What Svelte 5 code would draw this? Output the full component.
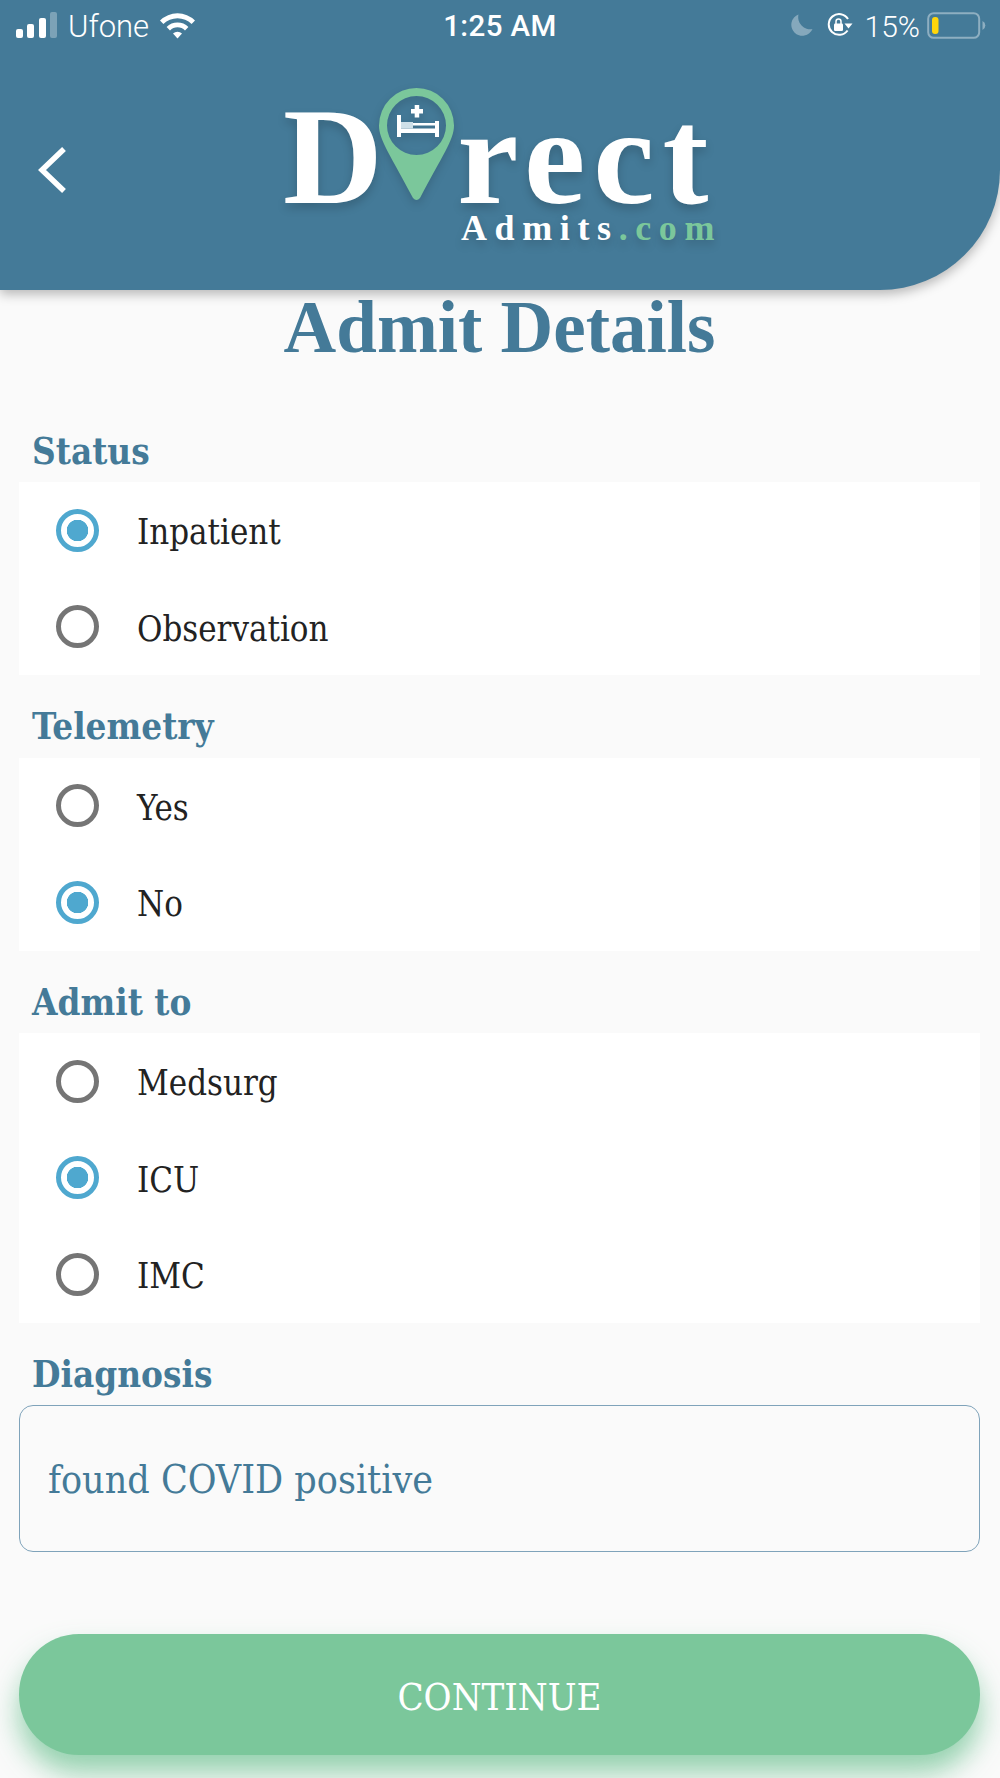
<script>
	const groups = [
		{ name: 'status', label: 'Status', options: ['Inpatient', 'Observation'] },
		{ name: 'telemetry', label: 'Telemetry', options: ['Yes', 'No'] },
		{ name: 'admit', label: 'Admit to', options: ['Medsurg', 'ICU', 'IMC'] }
	];

	let picked = $state({ status: 'Inpatient', telemetry: 'No', admit: 'ICU' });
	let diagnosis = $state('found COVID positive');
</script>

<div class="page">
	<header class="top">
		<div class="statusbar">
			<div class="side">
				<svg class="signal" width="42" height="26" viewBox="0 0 42 26">
					<rect x="0" y="17" width="7" height="9" rx="2" fill="#fff" />
					<rect x="11" y="12" width="7" height="14" rx="2" fill="#fff" />
					<rect x="23" y="6" width="7" height="20" rx="2" fill="#fff" />
					<rect x="34" y="0" width="7" height="26" rx="2" fill="#fff" opacity="0.3" />
				</svg>
				<span class="carrier">Ufone</span>
				<svg class="wifi" width="37" height="27" viewBox="0 0 37 27">
					<path d="M1 8.5 A25 25 0 0 1 36 8.5 L32.6 12 A20 20 0 0 0 4.4 12 Z" fill="#fff" />
					<path d="M7.6 15 A15.5 15.5 0 0 1 29.4 15 L26 18.5 A10.5 10.5 0 0 0 11 18.5 Z" fill="#fff" />
					<path d="M14 21.5 A6.5 6.5 0 0 1 23 21.5 L18.5 26.5 Z" fill="#fff" />
				</svg>
			</div>
			<div class="time">1:25 AM</div>
			<div class="side right">
				<svg width="23" height="22" viewBox="0 0 23 22" opacity="0.35">
					<path d="M8.5 0.5 A11 11 0 1 0 22.5 15 A12 12 0 0 1 8.5 0.5 Z" fill="#fff" />
				</svg>
				<svg class="lock" width="26" height="24" viewBox="0 0 26 24">
					<path d="M20.6 17.5 A10.4 10.4 0 1 1 21 6" fill="none" stroke="#fff" stroke-width="2" />
					<path d="M17.5 10.5 H25.5 L21.5 15.5 Z" fill="#fff" />
					<rect x="7" y="10.5" width="9" height="7.5" rx="1.2" fill="#fff" />
					<path d="M9 11 V8.5 A2.5 2.5 0 0 1 14 8.5 V11" fill="none" stroke="#fff" stroke-width="1.5" />
				</svg>
				<span class="pct">15%</span>
				<svg width="60" height="27" viewBox="0 0 60 27">
					<rect x="1.2" y="1.2" width="51" height="24.6" rx="5.5" fill="none" stroke="#fff" stroke-opacity="0.4" stroke-width="2" />
					<rect x="5" y="5" width="6.5" height="17" rx="3" fill="#ffd60a" />
					<path d="M55.5 9 A5 5 0 0 1 55.5 18 Z" fill="#fff" fill-opacity="0.4" />
				</svg>
			</div>
		</div>

		<button class="back" aria-label="Back">
			<svg width="32" height="48" viewBox="0 0 32 48">
				<path d="M27 3 L5 24 L27 45" fill="none" stroke="#fff" stroke-width="5.5" />
			</svg>
		</button>

		<div class="logo">
			<div class="word">
				<span>D</span>
				<svg class="pin" width="75" height="113" viewBox="0 0 75 113">
					<path
						fill-rule="evenodd"
						fill="#7bc79b"
						d="M37.5 0 A37.5 37.5 0 0 1 75 37.5 C75 52 63 68 41 110 Q37.5 114 34 110 C12 68 0 52 0 37.5 A37.5 37.5 0 0 1 37.5 0 Z M37.5 8 A29.5 29.5 0 1 0 37.5 67 A29.5 29.5 0 1 0 37.5 8 Z"
					/>
					<rect x="18" y="27" width="4" height="22" fill="#fff" />
					<rect x="56" y="33" width="4" height="16" fill="#fff" />
					<rect x="18" y="40.5" width="42" height="4.5" fill="#fff" />
					<rect x="22" y="34" width="12" height="6.5" fill="#cfe0e8" />
					<rect x="34" y="35" width="22" height="2.5" fill="#fff" />
					<rect x="32" y="21" width="12" height="4.5" fill="#fff" />
					<rect x="35.7" y="17" width="4.5" height="12.5" fill="#fff" />
				</svg>
				<span class="rest">rect</span>
			</div>
			<div class="sub">Admits<em>.com</em></div>
		</div>
	</header>

	<main class="body">
		<h1>Admit Details</h1>

		{#each groups as group}
			<div class="label">{group.label}</div>
			<div class="card">
				{#each group.options as option}
					<button class="row" onclick={() => (picked[group.name] = option)}>
						<span class="radio" class:on={picked[group.name] === option}></span>
						<span class="text">{option}</span>
					</button>
				{/each}
			</div>
		{/each}

		<div class="label">Diagnosis</div>
		<input class="field" bind:value={diagnosis} />

		<button class="continue">CONTINUE</button>
	</main>
</div>

<style>
	:global(body) {
		background: #fafafa;
	}

	.page {
		width: 1000px;
		height: 1778px;
		overflow: hidden;
		background: #fafafa;
		font-family: 'DejaVu Serif Condensed', 'DejaVu Serif', serif;
	}

	.top {
		height: 290px;
		background: #447a98;
		border-bottom-right-radius: 120px;
		box-shadow: 0 4px 12px rgba(0, 0, 0, 0.28);
		position: relative;
		color: #fff;
	}

	.statusbar {
		display: grid;
		grid-template-columns: 1fr auto 1fr;
		align-items: center;
		height: 50px;
		padding: 0 13px 0 16px;
		font-family: Roboto, 'Liberation Sans', sans-serif;
		font-size: 30px;
	}

	.side {
		display: flex;
		align-items: center;
	}

	.side.right {
		justify-content: flex-end;
	}

	.carrier {
		margin: 2px 10px 0 10px;
		font-size: 31px;
		font-weight: 300;
	}

	.time {
		margin: 2px 0 0 -3px;
		font-weight: 500;
		font-size: 29.5px;
		letter-spacing: 0.4px;
	}

	.lock {
		margin-left: 14px;
	}

	.pct {
		margin: 2px 7px 0 12px;
		font-weight: 300;
	}

	.back {
		position: absolute;
		left: 37px;
		top: 146px;
		padding: 0;
		border: 0;
		background: none;
		line-height: 0;
	}

	.logo {
		width: 432px;
		margin: 39px auto 0 283px;
		font-family: 'Liberation Serif', serif;
		font-weight: 700;
		text-shadow: 0 5px 10px rgba(0, 0, 0, 0.18);
	}

	.word {
		display: flex;
		align-items: flex-end;
		height: 112px;
		font-size: 138px;
		line-height: 112px;
	}

	.word span {
		display: block;
		height: 112px;
		line-height: 136px;
	}

	.pin {
		margin: 0 3px 0 -3.5px;
		flex: none;
		filter: drop-shadow(0 4px 5px rgba(0, 0, 0, 0.15));
	}

	.rest {
		letter-spacing: 8px;
	}

	.sub {
		margin-top: 10px;
		text-align: right;
		font-size: 36px;
		line-height: 34px;
		letter-spacing: 7.6px;
		margin-right: -7px;
	}

	.sub em {
		font-style: normal;
		color: #7bc79b;
	}

	.body {
		padding: 0 20px 0 19px;
		display: flex;
		flex-direction: column;
	}

	h1 {
		margin: 0;
		height: 109.5px;
		text-align: center;
		font-family: 'Liberation Serif', serif;
		font-weight: 700;
		font-size: 73px;
		line-height: 76px;
		color: #447a98;
	}

	.label {
		height: 82.5px;
		flex: none;
		display: flex;
		align-items: flex-end;
		padding: 0 0 9.5px 13px;
		box-sizing: border-box;
		font-size: 36.5px;
		font-weight: 700;
		color: #447a98;
	}

	.card {
		background: #fff;
		display: flex;
		flex-direction: column;
	}

	.row {
		height: 96.5px;
		display: flex;
		align-items: center;
		gap: 38px;
		padding: 0 0 0 37px;
		border: 0;
		background: none;
		text-align: left;
		font: inherit;
		font-size: 34.5px;
		color: #222;
	}

	.text {
		padding-top: 4px;
	}

	.radio {
		width: 43px;
		height: 43px;
		box-sizing: border-box;
		border: 5.5px solid #757575;
		border-radius: 50%;
		flex: none;
	}

	.radio.on {
		border-color: #4fa8cf;
		background: radial-gradient(circle, #4fa8cf 0 10.5px, #fff 11px);
	}

	.field {
		height: 147px;
		flex: none;
		box-sizing: border-box;
		border: 1px solid #7fa3ba;
		border-radius: 14px;
		background: #fafafa;
		padding: 2px 28px 0;
		font: inherit;
		font-size: 39px;
		color: #447a98;
		outline: none;
	}

	.continue {
		margin-top: 82px;
		height: 121px;
		flex: none;
		padding: 5px 0 0;
		border: 0;
		border-radius: 60px;
		background: #7bc79b;
		box-shadow: 0 18px 28px rgba(123, 199, 155, 0.8);
		color: #fff;
		font: inherit;
		font-size: 38px;
	}
</style>
